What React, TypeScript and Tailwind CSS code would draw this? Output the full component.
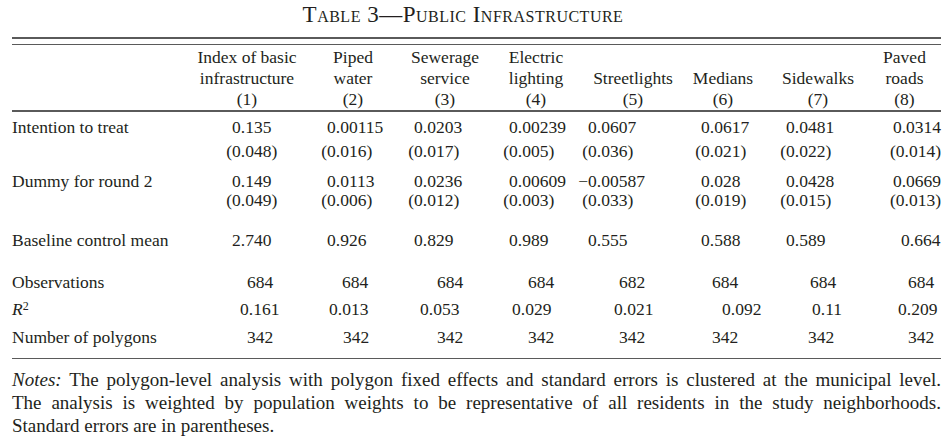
import React from 'react';

// Header labels per column (three stacked lines)
const headers: string[][] = [
  ['Index of basic', 'infrastructure', '(1)'],
  ['Piped', 'water', '(2)'],
  ['Sewerage', 'service', '(3)'],
  ['Electric', 'lighting', '(4)'],
  ['', 'Streetlights', '(5)'],
  ['', 'Medians', '(6)'],
  ['', 'Sidewalks', '(7)'],
  ['Paved', 'roads', '(8)'],
];

// Left offset of the first digit inside each column (decimal-ish alignment)
const numPad = ['pl-[38px]', 'pl-[27px]', 'pl-[8px]', 'pl-[25px]', 'pl-[0px]', 'pl-[23px]', 'pl-[18px]', 'pl-[33px]'];
const obsPad = ['pl-[53px]', 'pl-[42px]', 'pl-[31px]', 'pl-[44px]', 'pl-[31px]', 'pl-[34px]', 'pl-[42px]', 'pl-[40px]'];
const r2Pad = ['pl-[46px]', 'pl-[29px]', 'pl-[14px]', 'pl-[28px]', 'pl-[26px]', 'pl-[44px]', 'pl-[44px]', 'pl-[30px]'];
const nPad = ['pl-[53px]', 'pl-[43px]', 'pl-[31px]', 'pl-[44px]', 'pl-[31px]', 'pl-[34px]', 'pl-[40px]', 'pl-[40px]'];

const itt = ['0.135', '0.00115', '0.0203', '0.00239', '0.0607', '0.0617', '0.0481', '0.0314'];
const ittSe = ['0.048', '0.016', '0.017', '0.005', '0.036', '0.021', '0.022', '0.014'];
const dummy = ['0.149', '0.0113', '0.0236', '0.00609', '−0.00587', '0.028', '0.0428', '0.0669'];
const dummySe = ['0.049', '0.006', '0.012', '0.003', '0.033', '0.019', '0.015', '0.013'];
const baseline = ['2.740', '0.926', '0.829', '0.989', '0.555', '0.588', '0.589', '0.664'];
const obs = ['684', '684', '684', '684', '682', '684', '684', '684'];
const r2 = ['0.161', '0.013', '0.053', '0.029', '0.021', '0.092', '0.11', '0.209'];
const polys = ['342', '342', '342', '342', '342', '342', '342', '342'];

const GRID =
  'grid grid-cols-[182px_106px_106px_78px_104px_90px_90px_100px_73px]';

// A number whose leading minus hangs into the left margin
const Num = ({ value, pad }: { value: string; pad: string }) => {
  let prefix = '';
  let rest = value;
  if (value.startsWith('−')) {
    prefix = '−';
    rest = value.slice(1);
  }
  return (
    <div className={`flex whitespace-nowrap ${pad}`}>
      <span className="w-[12px] -ml-[12px] text-right">{prefix}</span>
      <span>{rest}</span>
    </div>
  );
};

// Standard error in parentheses, "(" hangs left of the digits
const SeNum = ({ value, pad }: { value: string; pad: string }) => (
  <div className={`flex whitespace-nowrap ${pad}`}>
    <span className="w-[12px] -ml-[12px] text-right">(</span>
    <span>{value})</span>
  </div>
);

const Rule = ({ className = '' }: { className?: string }) => (
  <div className={`h-[1.5px] bg-[#5a5a5a] ${className}`} />
);

export default function App() {
  return (
    <div className="w-[948px] h-[448px] bg-white text-[#231f20] font-['Liberation_Serif','Times_New_Roman',serif] overflow-hidden">
      {/* Title */}
      <div className="h-[37px] flex items-center justify-center pb-[6px] pr-[22px] text-[23px] [font-variant:small-caps] tracking-[0.5px]">
        Table 3—Public Infrastructure
      </div>

      <div className="ml-[12px] w-[929px]">
        <Rule />
        <Rule className="mt-[5px]" />

        {/* Column headers */}
        <div className={`${GRID} pt-[2px] text-[17.5px] leading-[21px]`}>
          <div />
          {headers.map((h, i) => (
            <div key={i} className="flex flex-col items-center whitespace-nowrap">
              <span className="h-[21px]">{h[0]}</span>
              <span className="h-[21px]">{h[1]}</span>
              <span className="h-[21px]">{h[2]}</span>
            </div>
          ))}
        </div>
        <Rule />

        {/* Body */}
        <div className="text-[17.5px] leading-[20px]">
          <div className={`${GRID} mt-[5px]`}>
            <div>Intention to treat</div>
            {itt.map((v, i) => (
              <Num key={i} value={v} pad={numPad[i]} />
            ))}
          </div>
          <div className={`${GRID} mt-[4px]`}>
            <div />
            {ittSe.map((v, i) => (
              <SeNum key={i} value={v} pad={numPad[i]} />
            ))}
          </div>

          <div className={`${GRID} mt-[11px] leading-[19px]`}>
            <div>Dummy for round 2</div>
            {dummy.map((v, i) => (
              <Num key={i} value={v} pad={numPad[i]} />
            ))}
          </div>
          <div className={`${GRID} leading-[19px]`}>
            <div />
            {dummySe.map((v, i) => (
              <SeNum key={i} value={v} pad={numPad[i]} />
            ))}
          </div>

          <div className={`${GRID} mt-[20px]`}>
            <div>Baseline control mean</div>
            {baseline.map((v, i) => (
              <Num key={i} value={v} pad={numPad[i]} />
            ))}
          </div>

          <div className={`${GRID} mt-[22px]`}>
            <div>Observations</div>
            {obs.map((v, i) => (
              <Num key={i} value={v} pad={obsPad[i]} />
            ))}
          </div>
          <div className={`${GRID} mt-[7px]`}>
            <div className="flex items-start">
              <i>R</i>
              <span className="text-[12px] leading-[12px] mt-[1px]">2</span>
            </div>
            {r2.map((v, i) => (
              <Num key={i} value={v} pad={r2Pad[i]} />
            ))}
          </div>
          <div className={`${GRID} mt-[8px]`}>
            <div>Number of polygons</div>
            {polys.map((v, i) => (
              <Num key={i} value={v} pad={nPad[i]} />
            ))}
          </div>
        </div>

        <Rule className="mt-[11px]" />

        {/* Notes */}
        <div className="mt-[9px] text-[19px] leading-[23px]">
          <div className="text-justify [text-align-last:justify]">
            <i>Notes:</i> The polygon-level analysis with polygon fixed effects and standard errors is clustered at the municipal level.
          </div>
          <div className="text-justify [text-align-last:justify]">
            The analysis is weighted by population weights to be representative of all residents in the study neighborhoods.
          </div>
          <div>Standard errors are in parentheses.</div>
        </div>
      </div>
    </div>
  );
}
